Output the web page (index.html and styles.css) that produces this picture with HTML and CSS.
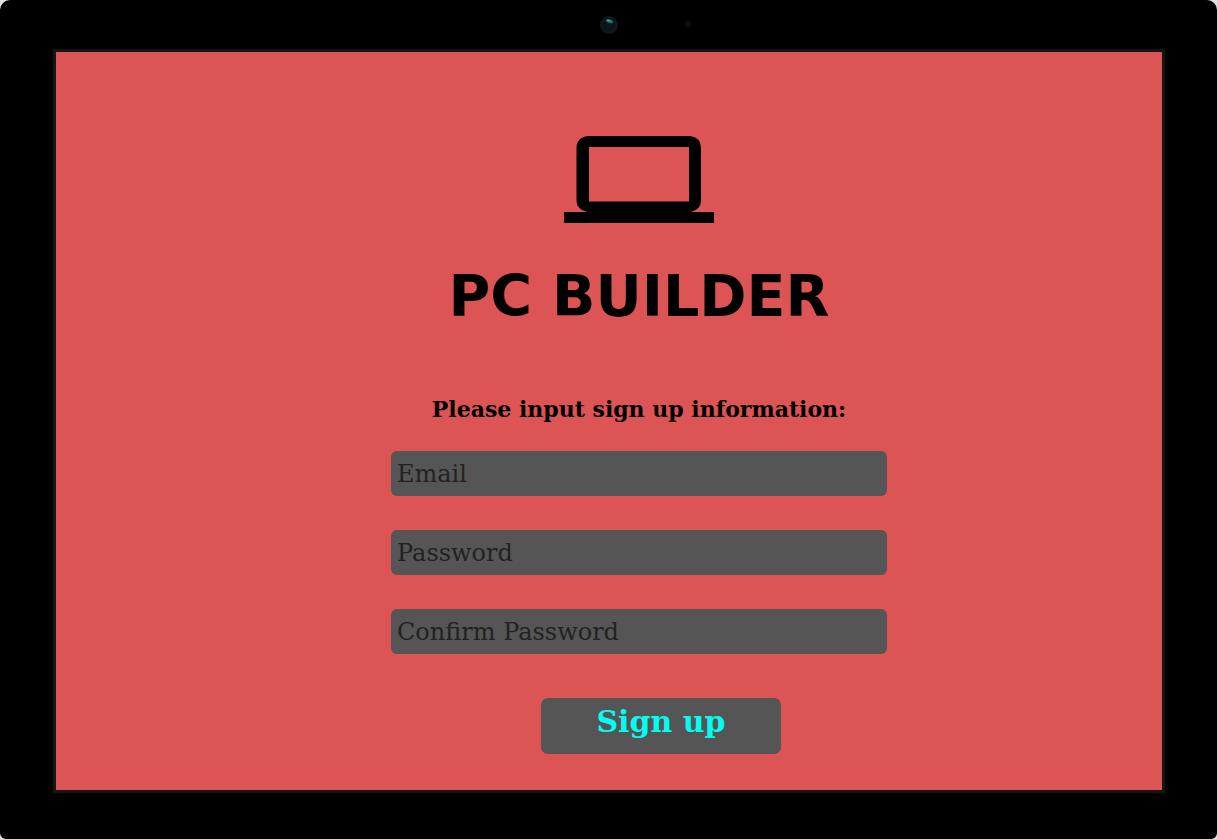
FILE: index.html
```html
<!DOCTYPE html>
<html lang="en">
<head>
<meta charset="utf-8">
<title>PC Builder</title>
<meta name="viewport" content="width=device-width, initial-scale=1">
<link rel="stylesheet" href="styles.css">
</head>
<body>
<div class="device">
  <div class="bezel">
    <svg class="camera" width="104" height="20" viewBox="0 0 104 20" aria-hidden="true">
      <circle cx="9" cy="10" r="9" fill="#12171a"/>
      <circle cx="9" cy="10" r="6.5" fill="#0b1418"/>
      <ellipse cx="9.500" cy="6.300" rx="4" ry="1.800" fill="#1f5d62" transform="rotate(14 9.500 6.300)"/>
      <ellipse cx="9" cy="5.600" rx="2.400" ry=".8" fill="#4a9a9a" transform="rotate(14 9 5.600)"/>
      <circle cx="88" cy="9" r="3.500" fill="#0d0d0d"/>
    </svg>
  </div>
  <main class="screen">
    <svg class="logo" width="150" height="88" viewBox="0 0 150 88" role="img" aria-label="Laptop">
      <path fill-rule="evenodd" d="M24 0H126Q137 1.500 137 12V65Q137 73 127 76H150V87H0V76H23Q12.500 73 12.500 65V12Q12.500 1.500 24 0ZM25 11V65.500H125V11Z"/>
    </svg>
    <h1 class="title">PC BUILDER</h1>
    <form class="form">
      <h2 class="prompt">Please input sign up information:</h2>
      <input class="field" type="email" placeholder="Email" aria-label="Email">
      <input class="field" type="password" placeholder="Password" aria-label="Password">
      <input class="field" type="password" placeholder="Confirm Password" aria-label="Confirm Password">
      <div class="actions">
        <button class="submit" type="submit">Sign up</button>
      </div>
    </form>
  </main>
</div>
</body>
</html>
```
FILE: styles.css
```css
* {
  box-sizing: border-box;
}

body {
  margin: 0;
  background: #dfe4e3;
  font-family: "DejaVu Serif", serif;
}

.device {
  display: flex;
  flex-direction: column;
  min-height: 100vh;
  padding: 0 52px 46px 53px;
  border-radius: 10px 10px 6px 6px;
  background: #000;
}

.bezel {
  display: flex;
  justify-content: center;
  height: 49px;
  padding: 15px 0 0 86px;
}

.camera {
  display: block;
}

.screen {
  display: flex;
  flex: 1;
  flex-direction: column;
  align-items: center;
  padding: 84px 0 32px 60px;
  border: 3px solid #151515;
  background: #dc5454;
}

.logo {
  display: block;
}

.title {
  margin: 40px 0 0;
  font: bold 57px/64px "DejaVu Sans", sans-serif;
}

.form {
  display: flex;
  flex-direction: column;
  gap: 34px;
  width: 496px;
  max-width: 100%;
  margin-top: 65px;
}

.prompt {
  margin: 0 0 -8px;
  font-size: 22px;
  line-height: 32px;
  text-align: center;
  white-space: nowrap;
}

.field {
  width: 100%;
  height: 45px;
  padding: 0 6px;
  border: 0;
  border-radius: 6px;
  background: #555;
  color: #111;
  font: 24px/32px "DejaVu Serif", serif;
}

.field::placeholder {
  color: #222;
  opacity: 1;
}

.actions {
  display: flex;
  justify-content: center;
  margin-top: 10px;
  padding-left: 44px;
}

.submit {
  width: 240px;
  height: 56px;
  padding: 0 0 8px;
  border: 0;
  border-radius: 7px;
  background: #555;
  color: #00fff0;
  font: bold 30px/40px "DejaVu Serif", serif;
}
```
